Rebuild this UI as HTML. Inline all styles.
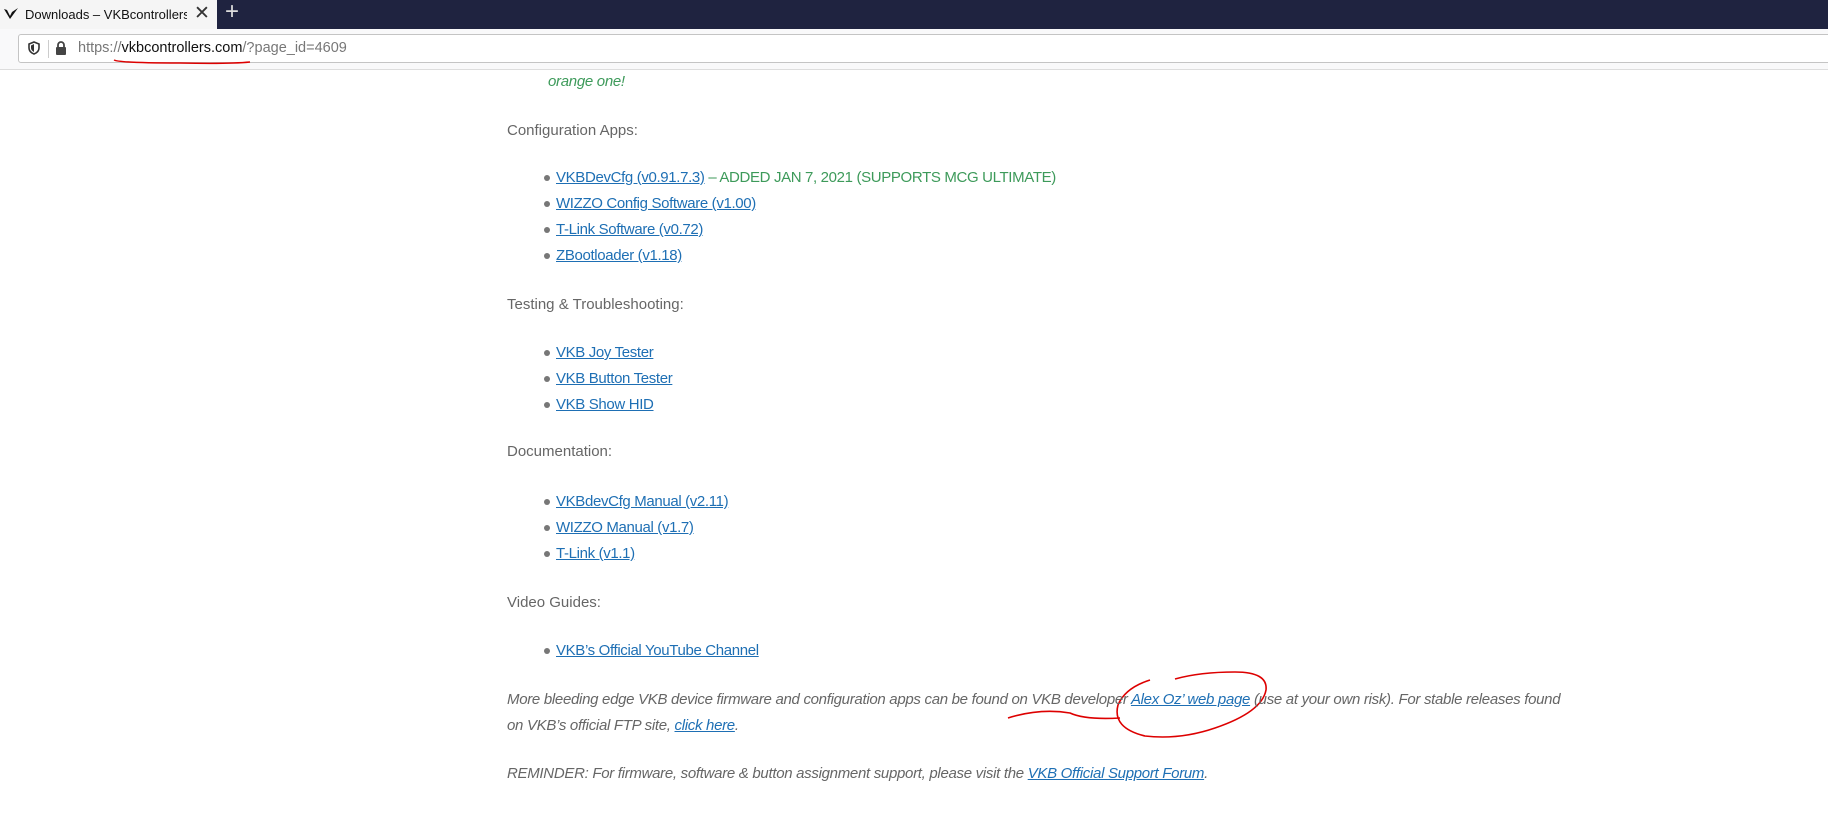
<!DOCTYPE html>
<html><head><meta charset="utf-8"><style>
*{margin:0;padding:0;box-sizing:border-box}
body{width:1828px;height:821px;background:#fff;position:relative;overflow:hidden;font-family:"Liberation Sans",sans-serif}
.tabbar{position:absolute;left:0;top:0;width:1828px;height:29px;background:#1f2340}
.tab{position:absolute;left:0;top:0;width:217px;height:29px;background:#f5f5f5}
.tabt{position:absolute;left:25px;top:7px;font-size:13px;color:#111;white-space:nowrap;width:162px;overflow:hidden}
.toolbar{position:absolute;left:0;top:29px;width:1828px;height:41px;background:#f9f9fa;border-bottom:1px solid #ddd}
.url{position:absolute;left:18px;top:34px;width:1820px;height:29px;background:#fff;border:1px solid #c4c4c4;border-radius:3px}
.urlt{position:absolute;left:78px;top:40px;font-size:14.5px;color:#777;white-space:nowrap}
.t{position:absolute;font-size:15px;line-height:20px;color:#666;white-space:nowrap}
a{color:#1e6fb4;text-decoration:underline}
.li{position:absolute;left:556px;font-size:15px;line-height:20px;white-space:nowrap;letter-spacing:-0.35px}
.li:before{content:"";position:absolute;left:-12px;top:7px;width:6px;height:6px;border-radius:50%;background:#777}
.g{color:#3d9a5a}
.i{font-style:italic;letter-spacing:-0.3px}
</style></head><body>
<div class="tabbar"></div>
<div class="tab"></div>
<svg style="position:absolute;left:3px;top:6px" width="16" height="16" viewBox="0 0 16 16"><path d="M1 3 L7 13 L15 2 L9 6 L7 10 L4 4Z" fill="#111"/></svg>
<div class="tabt">Downloads – VKBcontrollers.com</div>
<div style="position:absolute;left:194px;top:2px;font-size:19px;color:#333">✕</div>
<div style="position:absolute;left:225px;top:-2px;font-size:24px;color:#ddd">+</div>
<div class="toolbar"></div>
<div class="url"></div>
<svg style="position:absolute;left:28px;top:41px" width="12" height="14" viewBox="0 0 12 14"><path d="M6 1 L11 3 V7 C11 10 8.5 12 6 13 C3.5 12 1 10 1 7 V3Z" fill="none" stroke="#333" stroke-width="1.6"/><path d="M6 3 V11 C4 10 3 8.5 3 7 V4.5Z" fill="#333"/></svg>
<div style="position:absolute;left:48px;top:40px;width:1px;height:18px;background:#ccc"></div>
<svg style="position:absolute;left:55px;top:41px" width="12" height="14" viewBox="0 0 12 14"><path d="M3 6 V4 a3 3 0 0 1 6 0 V6" fill="none" stroke="#444" stroke-width="1.8"/><rect x="1" y="6" width="10" height="8" rx="1" fill="#444"/></svg>
<div class="urlt">https://<span style="color:#111">vkbcontrollers.com</span>/?page_id=4609</div>
<svg style="position:absolute;left:0;top:0" width="1828" height="821"><path d="M114 60 Q120 63 180 63 Q230 64 250 62" fill="none" stroke="#d00" stroke-width="1.5"/>
<path d="M1150 680 Q1125 688 1118 705 Q1112 728 1145 736 Q1180 740 1215 728 Q1262 712 1266 690 Q1268 672 1235 672 Q1200 672 1175 679" fill="none" stroke="#d00" stroke-width="1.6"/>
<path d="M1008 718 Q1040 708 1070 713 Q1085 720 1120 718" fill="none" stroke="#d00" stroke-width="1.6"/></svg>

<div class="t g i" style="left:548px;top:72px">orange one!</div>
<div class="t" style="left:507px;top:121px">Configuration Apps:</div>
<div class="li" style="top:168px"><a>VKBDevCfg (v0.91.7.3)</a> <span class="g">– ADDED JAN 7, 2021 (SUPPORTS MCG ULTIMATE)</span></div>
<div class="li" style="top:194px"><a>WIZZO Config Software (v1.00)</a></div>
<div class="li" style="top:220px"><a>T-Link Software (v0.72)</a></div>
<div class="li" style="top:246px"><a>ZBootloader (v1.18)</a></div>
<div class="t" style="left:507px;top:295px">Testing &amp; Troubleshooting:</div>
<div class="li" style="top:343px"><a>VKB Joy Tester</a></div>
<div class="li" style="top:369px"><a>VKB Button Tester</a></div>
<div class="li" style="top:395px"><a>VKB Show HID</a></div>
<div class="t" style="left:507px;top:442px">Documentation:</div>
<div class="li" style="top:492px"><a>VKBdevCfg Manual (v2.11)</a></div>
<div class="li" style="top:518px"><a>WIZZO Manual (v1.7)</a></div>
<div class="li" style="top:544px"><a>T-Link (v1.1)</a></div>
<div class="t" style="left:507px;top:593px">Video Guides:</div>
<div class="li" style="top:641px"><a>VKB’s Official YouTube Channel</a></div>
<div class="t i" style="left:507px;top:690px">More bleeding edge VKB device firmware and configuration apps can be found on VKB developer <a>Alex Oz’ web page</a> (use at your own risk). For stable releases found</div>
<div class="t i" style="left:507px;top:716px">on VKB’s official FTP site, <a>click here</a>.</div>
<div class="t i" style="left:507px;top:764px">REMINDER: For firmware, software &amp; button assignment support, please visit the <a>VKB Official Support Forum</a>.</div>
</body></html>
